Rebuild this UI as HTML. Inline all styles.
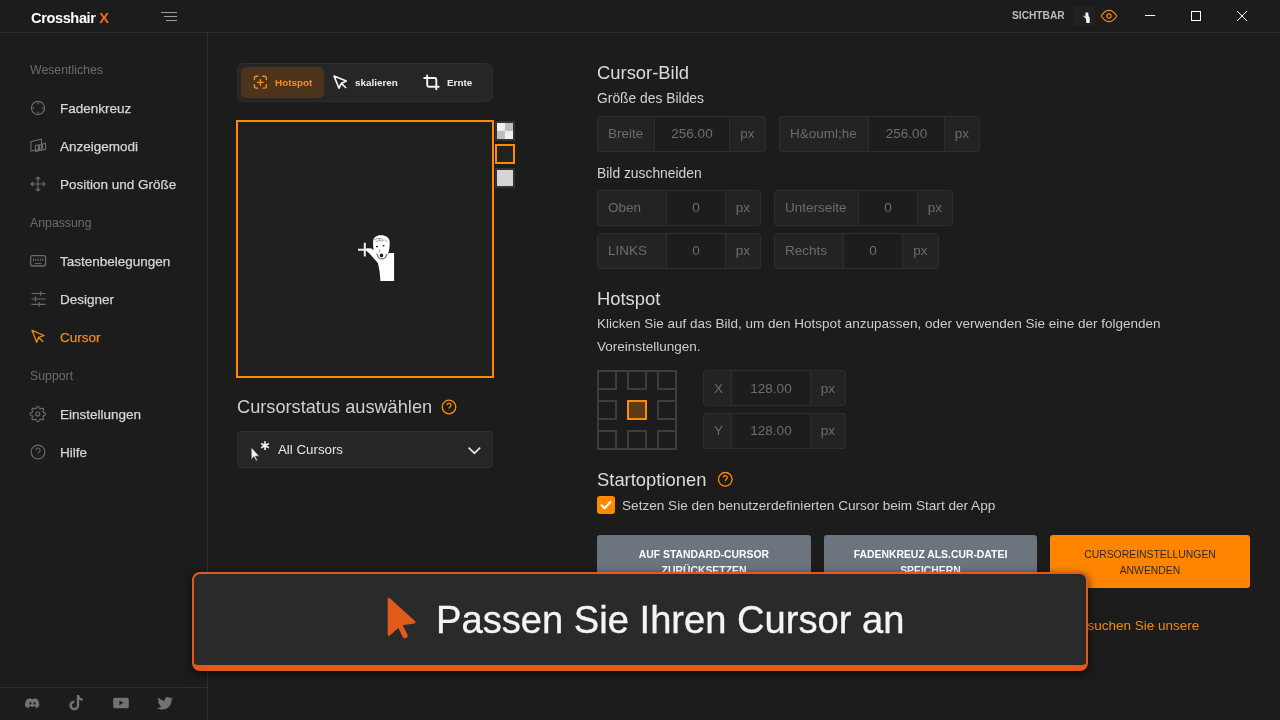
<!DOCTYPE html>
<html><head><meta charset="utf-8">
<style>
*{margin:0;padding:0;box-sizing:border-box}
html,body{width:1280px;height:720px;overflow:hidden;background:#1c1c1c;font-family:"Liberation Sans",sans-serif;color:#d8d8d8}
.a{position:absolute;white-space:nowrap;will-change:transform}
.hline{position:absolute;height:1px;background:#2e2e2e}
.vline{position:absolute;width:1px;background:#2e2e2e}
.sec{will-change:transform;position:absolute;left:30px;font-size:12.3px;color:#6b6b6b;line-height:1}
.item{will-change:transform;position:absolute;left:60px;font-size:13.5px;color:#d6d6d6;line-height:1;-webkit-text-stroke:.25px currentColor}
.ico{position:absolute;left:30px}
.grp{will-change:transform;position:absolute;height:36px;border:1px solid #2e2e2e;border-radius:3px;background:#232323;display:flex;font-size:13.5px;color:#6c6c6c}
.grp>div{display:flex;align-items:center;justify-content:center;height:100%;padding-bottom:1px}
.grp .lb{border-right:1px solid #2e2e2e;justify-content:flex-start!important;padding-left:10px}
.grp .vl{background:#1d1d1d;border-right:1px solid #2e2e2e;color:#6e6e6e}
.gx>div{padding-top:1px;padding-bottom:0}
.btn{will-change:transform;position:absolute;top:535px;height:53px;border-radius:3px;background:#6c757d;color:#fff;font-weight:bold;font-size:10.4px;text-align:center;line-height:16px;padding-top:11.5px}
</style></head><body>
<!-- title bar -->
<div class="a" style="left:31px;top:8.6px;font-size:14.6px;letter-spacing:-0.4px;font-weight:bold;color:#fff;line-height:18px">Crosshair <span style="color:#f26b1d">X</span></div>
<div class="a" style="left:161px;top:12px;width:16px;height:1px;background:#9a9a9a"></div>
<div class="a" style="left:164px;top:16px;width:13px;height:1px;background:#9a9a9a"></div>
<div class="a" style="left:166px;top:20px;width:11px;height:1px;background:#9a9a9a"></div>
<div class="hline" style="left:0;top:32px;width:1280px"></div>
<div class="vline" style="left:207px;top:33px;height:687px"></div>
<div class="hline" style="left:0;top:687px;width:207px"></div>

<div class="a" style="left:1012px;top:10px;font-size:10.2px;font-weight:bold;color:#bdbdbd;line-height:12px">SICHTBAR</div>
<div class="a" style="left:1073px;top:6px;width:22px;height:20px;background:#212121;border-radius:3px"></div>

<!-- sidebar icons -->
<svg class="a" style="left:0;top:0" width="207" height="720" viewBox="0 0 207 720" fill="none" stroke="#6a6a6a" stroke-width="1.2">
 <circle cx="38" cy="108" r="6.6"/>
 <path d="M38 102.6v1.6M38 111.8v1.6M32.6 108h1.6M41.8 108h1.6" stroke-width="1.4"/>
 <path d="M31 141.5l10.5-2.2v9.5l-10.5 2.2z M35.5 145.5l3-0.6v6l-3 .6z M39.5 144.7l3-.6v6l-3 .6z M42.5 144l3-.6v6l-3 .6z" stroke-width="1.1"/>
 <path d="M38 177v14M31 184h14M35.8 179.2l2.2-2.2 2.2 2.2M35.8 188.8l2.2 2.2 2.2-2.2M33.2 181.8l-2.2 2.2 2.2 2.2M42.8 181.8l2.2 2.2-2.2 2.2" stroke-width="1.15"/>
 <rect x="30.6" y="255.6" width="15" height="10.4" rx="2" stroke-width="1.3"/>
 <path d="M33.5 258.5v2.5M35.8 258.5v2.5M38 258.5v2.5M40.3 258.5v2.5M42.6 258.5v2.5M34.8 263.6h6.6" stroke-width="1"/>
 <path d="M31.5 293.5h14M31.5 299h14M31.5 304.3h14M40.5 291.2v4.6M35.5 296.6v4.8M39.3 302v4.6" stroke-width="1.2"/>
 <path d="M37.80 406.30 L38.29 406.45 L38.74 406.86 L39.11 407.43 L39.40 408.01 L39.68 408.48 L39.98 408.73 L40.38 408.77 L40.90 408.63 L41.52 408.43 L42.18 408.29 L42.79 408.31 L43.24 408.56 L43.49 409.01 L43.51 409.62 L43.37 410.28 L43.17 410.90 L43.03 411.42 L43.07 411.82 L43.32 412.12 L43.79 412.40 L44.37 412.69 L44.94 413.06 L45.35 413.51 L45.50 414.00 L45.35 414.49 L44.94 414.94 L44.37 415.31 L43.79 415.60 L43.32 415.88 L43.07 416.18 L43.03 416.58 L43.17 417.10 L43.37 417.72 L43.51 418.38 L43.49 418.99 L43.24 419.44 L42.79 419.69 L42.18 419.71 L41.52 419.57 L40.90 419.37 L40.38 419.23 L39.98 419.27 L39.68 419.52 L39.40 419.99 L39.11 420.57 L38.74 421.14 L38.29 421.55 L37.80 421.70 L37.31 421.55 L36.86 421.14 L36.49 420.57 L36.20 419.99 L35.92 419.52 L35.62 419.27 L35.22 419.23 L34.70 419.37 L34.08 419.57 L33.42 419.71 L32.81 419.69 L32.36 419.44 L32.11 418.99 L32.09 418.38 L32.23 417.72 L32.43 417.10 L32.57 416.58 L32.53 416.18 L32.28 415.88 L31.81 415.60 L31.23 415.31 L30.66 414.94 L30.25 414.49 L30.10 414.00 L30.25 413.51 L30.66 413.06 L31.23 412.69 L31.81 412.40 L32.28 412.12 L32.53 411.82 L32.57 411.42 L32.43 410.90 L32.23 410.28 L32.09 409.62 L32.11 409.01 L32.36 408.56 L32.81 408.31 L33.42 408.29 L34.08 408.43 L34.70 408.63 L35.22 408.77 L35.62 408.73 L35.92 408.48 L36.20 408.01 L36.49 407.43 L36.86 406.86 L37.31 406.45Z" stroke-width="1.2"/>
 <circle cx="37.8" cy="414" r="2"/>
 <circle cx="38" cy="452" r="6.9"/>
 <path d="M35.9 450.2a2.1 2.1 0 1 1 3.3 1.7c-.8.5-1.2.9-1.2 1.7M38 455.5v.3" stroke-width="1.1"/>
</svg>
<svg class="a" style="left:0;top:0" width="60" height="360" viewBox="0 0 60 360" fill="none" stroke="#f08a12" stroke-width="1.3" stroke-linejoin="round" stroke-linecap="round">
 <path d="M32 330.3L44 335.5L38.7 337.3L36.7 342.3Z M38.7 337.3L42.7 341.5"/>
</svg>
<!-- sidebar -->
<div class="sec" style="top:64px">Wesentliches</div>
<div class="item" style="top:102px">Fadenkreuz</div>
<div class="item" style="top:140px">Anzeigemodi</div>
<div class="item" style="top:178px">Position und Größe</div>
<div class="sec" style="top:217px">Anpassung</div>
<div class="item" style="top:255px">Tastenbelegungen</div>
<div class="item" style="top:293px">Designer</div>
<div class="item" style="top:331px;color:#f08a12">Cursor</div>
<div class="sec" style="top:370px">Support</div>
<div class="item" style="top:408px">Einstellungen</div>
<div class="item" style="top:446px">Hilfe</div>

<!-- toolbar -->
<div class="a" style="left:237px;top:63px;width:256px;height:39px;border:1px solid #2f2f2f;border-radius:6px;background:#262626"></div>
<div class="a" style="left:241px;top:67px;width:83px;height:31px;border-radius:5px;background:#4b331c"></div>
<div class="a" style="left:275px;top:77px;font-size:9.9px;font-weight:bold;color:#ff8c1a;line-height:12px">Hotspot</div>
<div class="a" style="left:355px;top:77px;font-size:9.9px;font-weight:bold;color:#eee;line-height:12px">skalieren</div>
<div class="a" style="left:447px;top:77px;font-size:9.9px;font-weight:bold;color:#eee;line-height:12px">Ernte</div>

<!-- canvas -->
<div class="a" style="left:236px;top:120px;width:258px;height:258px;border:2px solid #ff8a00;background:#202020"></div>
<div class="a" style="left:495px;top:121px;width:20px;height:20px;background:#333;padding:2px"><div style="width:16px;height:16px;background:linear-gradient(#eee,#eee) 0 0/8px 8px no-repeat,linear-gradient(#eee,#eee) 8px 8px/8px 8px no-repeat,#bdbdbd"></div></div>
<div class="a" style="left:495px;top:144px;width:20px;height:20px;border:2px solid #ff8a00;background:#222"></div>
<div class="a" style="left:495px;top:168px;width:20px;height:20px;background:#333;padding:2px"><div style="width:16px;height:16px;background:#d4d4d4"></div></div>

<div class="a" style="left:237px;top:396px;font-size:18.2px;color:#cfcfcf;line-height:22px">Cursorstatus auswählen</div>
<div class="a" style="left:237px;top:431px;width:256px;height:37px;border:1px solid #303030;border-radius:4px;background:#262626"></div>
<div class="a" style="left:278px;top:443px;font-size:13.3px;color:#e6e6e6;line-height:14px">All Cursors</div>

<!-- right panel -->
<div class="a" style="left:597px;top:62px;font-size:18.4px;color:#dcdcdc;line-height:22px">Cursor-Bild</div>
<div class="a" style="left:597px;top:90px;font-size:13.85px;color:#d2d2d2;line-height:16px">Größe des Bildes</div>
<div class="grp" style="left:597px;top:116px;width:169px"><div class="lb" style="width:57px">Breite</div><div class="vl" style="width:75px">256.00</div><div style="flex:1">px</div></div>
<div class="grp" style="left:779px;top:116px;width:201px"><div class="lb" style="width:89px">H&amp;ouml;he</div><div class="vl" style="width:76px">256.00</div><div style="flex:1">px</div></div>
<div class="a" style="left:597px;top:165px;font-size:13.85px;color:#d2d2d2;line-height:16px">Bild zuschneiden</div>
<div class="grp" style="left:597px;top:190px;width:164px"><div class="lb" style="width:69px">Oben</div><div class="vl" style="width:59px">0</div><div style="flex:1">px</div></div>
<div class="grp" style="left:774px;top:190px;width:179px"><div class="lb" style="width:84px">Unterseite</div><div class="vl" style="width:59px">0</div><div style="flex:1">px</div></div>
<div class="grp" style="left:597px;top:233px;width:164px"><div class="lb" style="width:69px">LINKS</div><div class="vl" style="width:59px">0</div><div style="flex:1">px</div></div>
<div class="grp" style="left:774px;top:233px;width:165px"><div class="lb" style="width:69px">Rechts</div><div class="vl" style="width:59px">0</div><div style="flex:1">px</div></div>

<div class="a" style="left:597px;top:288px;font-size:18.4px;color:#dcdcdc;line-height:22px">Hotspot</div>
<div class="a" style="left:597px;top:311.5px;font-size:13.5px;color:#cccccc;line-height:23px;white-space:normal;width:600px">Klicken Sie auf das Bild, um den Hotspot anzupassen, oder verwenden Sie eine der folgenden<br>Voreinstellungen.</div>

<div class="grp gx" style="left:703px;top:370px;width:143px;height:36px"><div class="lb" style="width:28px">X</div><div class="vl" style="width:79px">128.00</div><div style="flex:1">px</div></div>
<div class="grp" style="left:703px;top:413px;width:143px;height:36px"><div class="lb" style="width:28px">Y</div><div class="vl" style="width:79px">128.00</div><div style="flex:1">px</div></div>

<div class="a" style="left:597px;top:469px;font-size:18.4px;color:#dcdcdc;line-height:22px">Startoptionen</div>
<div class="a" style="left:597px;top:496px;width:18px;height:18px;border-radius:3px;background:#ff8a00"></div>
<div class="a" style="left:622px;top:498px;font-size:13.6px;color:#c8ccd4;line-height:16px">Setzen Sie den benutzerdefinierten Cursor beim Start der App</div>

<div class="btn" style="left:597px;width:214px">AUF STANDARD-CURSOR<br>ZURÜCKSETZEN</div>
<div class="btn" style="left:824px;width:213px">FADENKREUZ ALS.CUR-DATEI<br>SPEICHERN</div>
<div class="btn" style="left:1050px;width:200px;background:#ff8500;color:#2a2a2a;font-weight:normal;font-size:10.4px">CURSOREINSTELLUNGEN<br>ANWENDEN</div>
<div class="a" style="right:81px;top:618px;font-size:13.5px;color:#f08a12;line-height:16px">Besuchen Sie unsere</div>

<!-- banner -->
<div class="a" style="left:192px;top:571.5px;width:896px;height:98.6px;border:2px solid #e05a1c;border-bottom-width:6.5px;border-radius:8px;background:#2a2a2a;box-shadow:0 3px 10px rgba(0,0,0,.65)"></div>
<div class="a" style="left:436px;top:598px;font-size:38.15px;color:#f4f4f4;line-height:44px;-webkit-text-stroke:.35px #f4f4f4">Passen Sie Ihren Cursor an</div>

<!-- title icons -->
<svg class="a" style="left:1060px;top:0" width="220" height="32" viewBox="1060 0 220 32" fill="none">
 <path d="M1085.5 12.5h2.6l.7 4 .9 1v5.6h-3.4l-.3-4.2-1.2-1.4-1.8-1.6 .6-.4 1.8 1.2z" fill="#f2f2f2"/>
 <path d="M1101.3 16c2.3-3.8 4.9-5.6 7.7-5.6s5.4 1.8 7.7 5.6c-2.3 3.8-4.9 5.6-7.7 5.6s-5.4-1.8-7.7-5.6z" stroke="#f08a12" stroke-width="1.15"/>
 <circle cx="1109" cy="16" r="2.1" stroke="#f08a12" stroke-width="1.15"/>
 <path d="M1145 15.5h10.2" stroke="#fff" stroke-width="1"/>
 <rect x="1191.5" y="11.5" width="9" height="9" stroke="#fff" stroke-width="1"/>
 <path d="M1237 11l10 10M1247 11l-10 10" stroke="#fff" stroke-width="1"/>
</svg>
<!-- toolbar icons -->
<svg class="a" style="left:240px;top:66px" width="220" height="34" viewBox="240 66 220 34" fill="none" stroke-linecap="round" stroke-linejoin="round">
 <path d="M254.4 79.6v-1.6a1.7 1.7 0 0 1 1.7-1.7h1.8M262.8 76.3h1.8a1.7 1.7 0 0 1 1.7 1.7v1.6M266.3 84.8v1.6a1.7 1.7 0 0 1-1.7 1.7h-1.8M257.9 88.1h-1.8a1.7 1.7 0 0 1-1.7-1.7v-1.6M260.4 79.6v5.6M257.6 82.4h5.6" stroke="#ff8c1a" stroke-width="1.4"/>
 <path d="M334 76L346.3 81L341.3 83.4L339 88.2Z M341.3 83.4L345.7 87.5" stroke="#f4f4f4" stroke-width="1.7"/>
 <path d="M427.2 75.5V85.2a1.5 1.5 0 0 0 1.5 1.5H438.7M424.2 78H434.8a1.5 1.5 0 0 1 1.5 1.5V89.3" stroke="#f4f4f4" stroke-width="1.9"/>
</svg>
<!-- canvas meme -->
<svg class="a" style="left:350px;top:230px" width="50" height="56" viewBox="350 230 50 56">
 <path d="M358 248.7h13.7v2h-13.7z M363.8 242.8h2v13.8h-2z" fill="#eee"/>
 <path d="M366.5 248.2L371 248.4L375.7 251L378.6 256.5L381 258.5L385 258.5L387.5 255L389 253H394.1V281.1H380.4C380.1 274 379.3 268 377.8 263L375.7 260.6L369.5 253.5L366.5 251Z" fill="#fff"/>
 <path d="M373.2 240.2c.8-3.5 4-5 7.7-5 5 0 8.8 2.2 8.8 6.9 0 4.3-.4 9.6-2.3 13.4-1.4 3.2-3.8 4.9-6.3 4.9-3.3 0-5.7-2.9-6.6-6.2-.9-3.5-1.9-9.5-1.3-14z" fill="#fff"/>
 <path d="M374 240c2-1.5 5-2 8-1.2M375.5 241.8c2-1.2 5-1.6 7.5-.6M378 238.2l2.5 2.2M382 238.5l2 2.4M385 239.5l1.8 2.2" stroke="#8a8a8a" stroke-width=".8" fill="none"/><path d="M377 253.5c.5 3 2.4 5.2 4.6 5.4 2.4.1 4.3-1.8 5.2-4.8" stroke="#777" stroke-width="1.3" fill="none"/>
 <ellipse cx="377" cy="246.6" rx="1.1" ry=".8" fill="#222"/>
 <ellipse cx="383.5" cy="245.8" rx="1.1" ry=".8" fill="#222"/>
 <path d="M380 249.5l-.8 3" stroke="#777" stroke-width=".7" fill="none"/>
 <ellipse cx="381.5" cy="255.4" rx="1.7" ry="1.9" fill="#1a1a1a"/>
 
</svg>
<!-- dropdown icons -->
<svg class="a" style="left:245px;top:438px" width="245" height="26" viewBox="245 438 245 26">
 <path d="M251.2 447.2v12.3l2.8-2.7 2 4.2 1.5-.7-2-4.1h3.9z" fill="#f0f0f0" stroke="#222" stroke-width=".6"/>
 <path d="M265 441.3v8.7M261.2 443.5l7.6 4.3M261.2 447.8l7.6-4.3" stroke="#f4f4f4" stroke-width="1.6"/>
 <path d="M468.6 447.6l5.8 5.6 5.8-5.6" stroke="#e0e0e0" stroke-width="1.8" fill="none"/>
</svg>
<!-- question icons -->
<svg class="a" style="left:440px;top:398px" width="20" height="20" viewBox="440 398 20 20" fill="none" stroke="#ff8a12">
 <circle cx="449" cy="407" r="6.8" stroke-width="1.3"/>
 <path d="M447 405.3a2 2 0 1 1 3 1.7c-.7.4-1 .8-1 1.6M449 410.4v.4" stroke-width="1.3"/>
</svg>
<svg class="a" style="left:716px;top:470px" width="20" height="20" viewBox="716 470 20 20" fill="none" stroke="#ff8a12">
 <circle cx="725.3" cy="479.3" r="6.8" stroke-width="1.3"/>
 <path d="M723.3 477.6a2 2 0 1 1 3 1.7c-.7.4-1 .8-1 1.6M725.3 482.7v.4" stroke-width="1.3"/>
</svg>
<!-- hotspot grid -->
<svg class="a" style="left:596px;top:369px" width="82" height="82" viewBox="596 369 82 82" fill="none" stroke="#3d3d3d" stroke-width="2">
 <rect x="598" y="371" width="78" height="78"/>
 <rect x="598" y="371" width="18" height="18"/><rect x="628" y="371" width="18" height="18"/><rect x="658" y="371" width="18" height="18"/>
 <rect x="598" y="401" width="18" height="18"/><rect x="658" y="401" width="18" height="18"/>
 <rect x="598" y="431" width="18" height="18"/><rect x="628" y="431" width="18" height="18"/><rect x="658" y="431" width="18" height="18"/>
 <rect x="628" y="401" width="18" height="18" stroke="#ff8a00" fill="#5a3a18"/>
</svg>
<!-- checkbox check -->
<svg class="a" style="left:597px;top:496px" width="18" height="18" viewBox="0 0 18 18" fill="none">
 <path d="M4.6 9.2l3 3 5.8-6.2" stroke="#fff" stroke-width="2" stroke-linecap="round" stroke-linejoin="round"/>
</svg>
<!-- social -->
<svg class="a" style="left:20px;top:690px" width="160" height="26" viewBox="20 690 160 26" fill="#727272">
 <path transform="translate(32 702.8) scale(.92) translate(-33 -701.5)" d="M28 697.6c1.4-.6 2.6-.9 3.6-1l.4.8c1-.1 2.1-.1 3 0l.4-.8c1 .1 2.2.4 3.6 1 1.5 2.3 2.1 4.8 1.9 7.7-1.4 1-2.7 1.6-3.9 2l-.9-1.4c.5-.2 1-.4 1.4-.7l-.3-.3c-2.6 1.2-5.4 1.2-8 0l-.3.3c.4.3.9.5 1.4.7l-.9 1.4c-1.2-.4-2.5-1-3.9-2-.2-2.9.4-5.4 1.9-7.7zm3.3 5.9c.7 0 1.2-.6 1.2-1.3s-.5-1.3-1.2-1.3-1.2.6-1.2 1.3.5 1.3 1.2 1.3zm4.4 0c.7 0 1.2-.6 1.2-1.3s-.5-1.3-1.2-1.3-1.2.6-1.2 1.3.5 1.3 1.2 1.3z"/>
 <path transform="translate(1.5 0)" d="M75.3 695h2.4c.2 2 1.4 3.3 3.5 3.5v2.4c-1.3 0-2.5-.4-3.5-1.1v5.6c0 2.7-2.2 4.9-4.9 4.9s-4.9-2.2-4.9-4.9 2.2-4.9 4.9-4.9v2.5c-1.3 0-2.4 1.1-2.4 2.4s1.1 2.4 2.4 2.4 2.5-1.1 2.5-2.4z"/>
 <path d="M115 697.8h12c1 0 1.8.8 1.8 1.8v6.8c0 1-.8 1.8-1.8 1.8h-12c-1 0-1.8-.8-1.8-1.8v-6.8c0-1 .8-1.8 1.8-1.8zm4.4 2.6v4.8l4-2.4z" fill-rule="evenodd"/>
 <path d="M172.4 698.3c-.5.2-1.1.4-1.7.5.6-.4 1.1-1 1.3-1.6-.6.3-1.2.6-1.9.7-1.2-1.3-3.2-1.3-4.4-.1-.8.8-1.1 1.9-.9 2.9-2.5-.1-4.8-1.3-6.3-3.2-.8 1.4-.4 3.2.9 4.1-.5 0-1-.2-1.4-.4 0 1.5 1 2.8 2.5 3.1-.5.1-.9.2-1.4.1.4 1.2 1.5 2.1 2.9 2.1-1.2.9-2.6 1.4-4.1 1.4-.3 0-.5 0-.8 0 1.5 1 3.3 1.5 5.1 1.5 6.1 0 9.5-5.1 9.5-9.5v-.4c.7-.5 1.2-1.1 1.7-1.8z"/>
</svg>
<!-- banner cursor -->
<svg class="a" style="left:380px;top:592px" width="44" height="52" viewBox="380 592 44 52">
 <path d="M389 599.2L389 634.6L398.2 626.2L403.8 623.6L414.3 622.1Z" fill="#e05a1c" stroke="#e05a1c" stroke-width="2.6" stroke-linejoin="round"/><path d="M399.8 625.2L405 635.6" stroke="#e05a1c" stroke-width="5.2" stroke-linecap="round"/>
</svg>
</body></html>
